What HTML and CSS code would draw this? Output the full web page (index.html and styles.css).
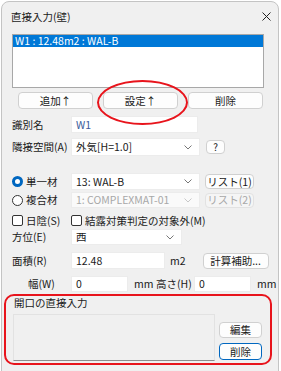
FILE: index.html
```html
<!DOCTYPE html>
<html lang="ja">
<head>
    <meta charset="UTF-8">
    <title>直接入力(壁)</title>
    <link rel="stylesheet" href="styles.css">
</head>
<body>

<div class="window">
    <div class="titlebar">
        <span class="title">直接入力(壁)</span>
        <svg class="close" width="9" height="9" viewBox="0 0 9 9"><path d="M0.5 0.5L8.5 8.5M8.5 0.5L0.5 8.5" stroke="#222" stroke-width="1"/></svg>
    </div>

    <div class="body">
        <div class="listbox"><!--壁の一覧-->
            <div class="list-item selected">W1 : 12.48m2 : WAL-B</div>
        </div>

        <div class="btn-row">
            <div class="btn w75">追加↑</div>
            <div class="btn w75">設定↑</div>
            <div class="btn w75">削除</div>
            <span class="mark-oval"></span>
        </div>

        <div class="row r-name">
            <span class="lbl">識別名</span>
            <div class="field w-name val-blue">W1</div>
        </div>

        <div class="row r-adj">
            <span class="lbl">隣接空間(A)</span>
            <div class="field select w-sel">外気[H=1.0]
                <svg class="chev" width="8" height="5" viewBox="0 0 8 5"><path d="M0.5 0.5L4 4L7.5 0.5" fill="none" stroke="#777" stroke-width="1"/></svg>
            </div>
            <div class="btn btn-q">?</div>
        </div>

        <div class="row r-single">
            <span class="lbl"><span class="radio on"></span>単一材</span>
            <div class="field select w-sel">13: WAL-B
                <svg class="chev" width="8" height="5" viewBox="0 0 8 5"><path d="M0.5 0.5L4 4L7.5 0.5" fill="none" stroke="#777" stroke-width="1"/></svg>
            </div>
            <div class="btn btn-list">リスト(1)</div>
        </div>

        <div class="row r-complex">
            <span class="lbl"><span class="radio"></span>複合材</span>
            <div class="field select w-sel disabled">1: COMPLEXMAT-01
                <svg class="chev" width="8" height="5" viewBox="0 0 8 5"><path d="M0.5 0.5L4 4L7.5 0.5" fill="none" stroke="#c8c8c8" stroke-width="1"/></svg>
            </div>
            <div class="btn btn-list disabled">リスト(2)</div>
        </div>

        <div class="row r-check">
            <span class="lbl"><span class="check"></span>日陰(S)</span>
            <span class="chk-label"><span class="check"></span>結露対策判定の対象外(M)</span>
        </div>

        <div class="row r-dir">
            <span class="lbl">方位(E)</span>
            <div class="field select w-dir">西
                <svg class="chev" width="8" height="5" viewBox="0 0 8 5"><path d="M0.5 0.5L4 4L7.5 0.5" fill="none" stroke="#777" stroke-width="1"/></svg>
            </div>
        </div>

        <div class="row r-area">
            <span class="lbl">面積(R)</span>
            <div class="field w-area">12.48</div>
            <span class="unit u-m2">m2</span>
            <div class="btn btn-calc">計算補助...</div>
        </div>

        <div class="row r-size">
            <span class="lbl lbl-w">幅(W)</span>
            <div class="field w-size">0</div>
            <span class="unit u-mm">mm</span>
            <span class="lbl-h">高さ(H)</span>
            <div class="field w-size">0</div>
            <span class="unit u-mm2">mm</span>
        </div>
    </div>

    <div class="group"><!--開口-->
        <div class="group-title">開口の直接入力</div>
        <div class="group-body">
            <div class="open-list"></div>
            <div class="group-btns">
                <div class="btn btn-small">編集</div>
                <div class="btn btn-small focus">削除</div>
            </div>
        </div>
    </div>
</div>

</body>
</html>
```

FILE: styles.css
```css
body{
    margin: 0;
    background: #fff;
    font-family: "Noto Sans CJK JP", "Liberation Sans", sans-serif;
    font-size: 10.5px;
    color: #1a1a1a;
    white-space: nowrap;
}
.window{
    width: 278px;
    height: 380px;
    margin: 1px 0 0 1px;
    box-sizing: border-box;
    border: 1px solid #c4c4c4;
    border-radius: 8px 8px 0 0;
    background: #f0f0f0;
    overflow: hidden;
}
.titlebar{
    height: 28px;
    display: flex;
    align-items: center;
    justify-content: space-between;
    padding: 0 7px 0 9px;
}
.title{
    line-height: 13px;
}
.body{
    padding: 4px 0 0 10px;
}

/* list */
.listbox{
    width: 252px;
    height: 54px;
    box-sizing: border-box;
    border: 1px solid #a8a8a8;
    background: #fff;
}
.list-item{
    height: 12px;
    line-height: 12px;
    padding-left: 2px;
}
.list-item.selected{
    background: #0078d7;
    color: #fff;
}

/* buttons */
.btn{
    box-sizing: border-box;
    border: 1px solid #d0d0d0;
    border-radius: 4px;
    background: #fdfdfd;
    display: flex;
    align-items: center;
    justify-content: center;
    line-height: 12px;
}
.btn.disabled{
    color: #a8a8a8;
    background: #f5f5f5;
    border-color: #e2e2e2;
}
.btn-row{
    position: relative;
    display: flex;
    gap: 10px;
    height: 17px;
    margin-top: 4px;
    padding-left: 6px;
}
.w75{
    width: 75px;
}
.mark-oval{
    position: absolute;
    left: 85px;
    top: -12px;
    width: 91px;
    height: 45px;
    box-sizing: border-box;
    border: 2.5px solid #e8141c;
    border-radius: 50%;
}

/* form rows */
.row{
    display: flex;
    align-items: center;
}
.lbl{
    width: 59px;
    flex: none;
    display: flex;
    align-items: center;
    line-height: 12px;
}
.field{
    height: 100%;
    box-sizing: border-box;
    background: #fff;
    border: 1px solid #ececec;
    display: flex;
    align-items: center;
    padding-left: 4px;
    line-height: 12px;
}
.select{
    position: relative;
    justify-content: space-between;
    padding-right: 7px;
}
.select.disabled{
    color: #a8a8a8;
    background: #fafafa;
}
.val-blue{
    color: #3b5b9c;
}
.r-name{ height: 17px; margin-top: 7px; }
.r-adj{ height: 18px; margin-top: 5px; }
.r-single{ height: 17px; margin-top: 17px; }
.r-complex{ height: 16px; margin-top: 2px; }
.r-check{ height: 15px; margin-top: 5px; }
.r-dir{ height: 16px; margin-top: 1px; }
.r-area{ height: 17px; margin-top: 7px; }
.r-size{ height: 16px; margin-top: 7px; }

.w-name{ width: 127px; }
.w-sel{ width: 129px; }
.w-dir{ width: 111px; }
.w-area{ width: 94px; }
.w-size{ width: 57px; }

.btn-q{
    width: 19px;
    height: 14px;
    margin-left: 6px;
    font-size: 10px;
}
.btn-list{
    width: 49px;
    height: 15px;
    margin-left: 5px;
}
.radio{
    width: 11px;
    height: 11px;
    box-sizing: border-box;
    border: 1px solid #333;
    border-radius: 50%;
    margin-right: 3px;
    background: #fff;
}
.radio.on{
    border: 3px solid #0067c0;
    background: #fff;
}
.check{
    width: 11px;
    height: 11px;
    box-sizing: border-box;
    border: 1px solid #333;
    border-radius: 2px;
    margin-right: 3px;
    background: #fff;
}
.chk-label{
    display: flex;
    align-items: center;
    line-height: 12px;
}
.unit{
    line-height: 12px;
}
.u-m2{ margin-left: 5px; }
.btn-calc{
    width: 66px;
    height: 16px;
    margin-left: 17px;
}
.lbl-w{
    padding-left: 16px;
    box-sizing: border-box;
}
.u-mm{
    margin-left: 6px;
    width: 16px;
}
.lbl-h{
    margin-left: 6px;
    width: 38px;
    line-height: 12px;
}
.u-mm2{ margin-left: 6px; }

/* bottom group */
.group{
    width: 268px;
    height: 71px;
    margin: 2px 0 0 2px;
    box-sizing: border-box;
    border: 2.5px solid #e8141c;
    border-radius: 10px;
    padding: 0 0 0 8px;
}
.group-title{
    line-height: 12px;
    margin-top: 1px;
}
.group-body{
    display: flex;
    margin-top: 5px;
}
.open-list{
    width: 202px;
    height: 47px;
    box-sizing: border-box;
    border: 1px solid #e2e2e2;
    border-bottom-color: #8c8c8c;
    background: #f0f0f0;
    margin-left: -1px;
}
.group-btns{
    display: flex;
    flex-direction: column;
    margin: 8px 0 0 4px;
    gap: 5px;
}
.btn-small{
    width: 43px;
    height: 16px;
}
.btn-small.focus{
    height: 17px;
    border-color: #0067c0;
}
```
